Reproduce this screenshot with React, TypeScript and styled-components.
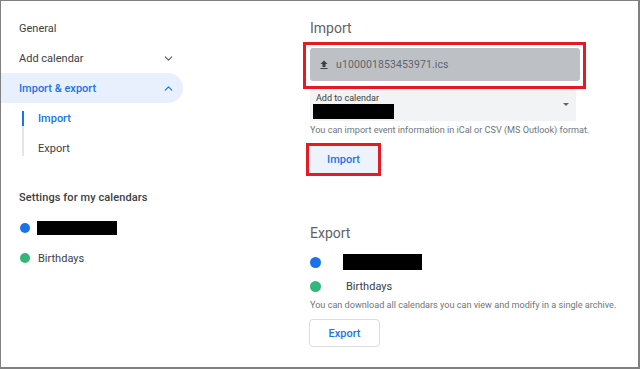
import React from "react";
import styled, { createGlobalStyle } from "styled-components";
import { ChevronDown, ChevronUp } from "lucide-react";

const GlobalStyle = createGlobalStyle`
	html, body {
		margin: 0;
		padding: 0;
		background: #fff;
	}
	body {
		font-family: Roboto, "Liberation Sans", Arial, sans-serif;
	}
`;

const Frame = styled.div`
	box-sizing: border-box;
	width: 640px;
	height: 369px;
	border-style: solid;
	border-color: #808080;
	border-width: 1px 2px 2px 1px;
	display: flex;
	overflow: hidden;
	background: #fff;
`;

const Sidebar = styled.nav`
	width: 182px;
	flex-shrink: 0;
	padding-top: 12px;
	display: flex;
	flex-direction: column;
`;

const NavRow = styled.div<{ $active?: boolean }>`
	height: 30px;
	display: flex;
	align-items: center;
	justify-content: space-between;
	padding: 0 8px 0 18px;
	font-size: 11px;
	font-weight: ${p => (p.$active ? 500 : 400)};
	color: ${p => (p.$active ? "#1a73e8" : "#3c4043")};
	background: ${p => (p.$active ? "#e8f0fe" : "transparent")};
	border-radius: 0 15px 15px 0;
`;

const SubList = styled.div`
	display: flex;
	flex-direction: column;
	margin-left: 21px;
`;

const SubItem = styled.div<{ $active?: boolean }>`
	height: 30px;
	display: flex;
	align-items: center;
	padding-left: 16px;
	font-size: 11px;
	font-weight: ${p => (p.$active ? 500 : 400)};
	color: ${p => (p.$active ? "#1a73e8" : "#3c4043")};
	background: ${p =>
		p.$active
			? "linear-gradient(to bottom, transparent 0 8px, #1a73e8 8px 23px, #e3e5e8 23px 30px)"
			: "linear-gradient(to bottom, #e3e5e8 0 23px, transparent 23px)"}
		left / 2px 100% no-repeat;
`;

const SectionTitle = styled.div`
	margin-top: 24px;
	height: 20px;
	display: flex;
	align-items: center;
	padding-left: 18px;
	font-size: 11px;
	font-weight: 500;
	color: #3c4043;
	letter-spacing: 0.1px;
`;

const CalList = styled.div`
	margin-top: 6px;
	display: flex;
	flex-direction: column;
`;

const CalRow = styled.div`
	height: 30px;
	display: flex;
	align-items: center;
	padding-left: 19px;
	gap: 7px;
	font-size: 11px;
	color: #3c4043;
`;

const Dot = styled.span<{ $color: string; $size: number }>`
	width: ${p => p.$size}px;
	height: ${p => p.$size}px;
	border-radius: 50%;
	background: ${p => p.$color};
	flex-shrink: 0;
`;

const Redacted = styled.span<{ $w: number; $h: number }>`
	display: inline-block;
	width: ${p => p.$w}px;
	height: ${p => p.$h}px;
	background: #000;
`;

const Main = styled.main`
	flex: 1;
	padding: 17px 0 0 127px;
	display: flex;
	flex-direction: column;
	align-items: flex-start;
`;

const Heading = styled.h2<{ $gap?: number }>`
	margin: ${p => p.$gap || 0}px 0 0;
	height: 20px;
	line-height: 20px;
	font-size: 14px;
	font-weight: 400;
	color: #5f6368;
`;

const Highlight = styled.div<{ $gap: number; $shift: number }>`
	margin: ${p => p.$gap}px 0 0 ${p => -p.$shift}px;
	border: 3px solid #e51b23;
`;

const FileBox = styled.div`
	margin: 3px 3px 5px 4px;
	width: 270px;
	height: 33px;
	box-sizing: border-box;
	background: #bdc1c6;
	border-radius: 3px;
	display: flex;
	align-items: center;
	padding-left: 8px;
	gap: 6px;
	font-size: 10.5px;
	letter-spacing: 0.1px;
	color: #5f6368;
`;

const Select = styled.div`
	width: 266px;
	height: 32px;
	box-sizing: border-box;
	background: #f1f3f4;
	border-radius: 3px 3px 0 0;
	padding: 5px 0 0 3px;
	display: flex;
	align-items: flex-start;
	justify-content: space-between;
`;

const SelectValue = styled.div`
	display: flex;
	flex-direction: column;
	gap: 1px;
`;

const SelectLabel = styled.span`
	font-size: 9px;
	line-height: 9px;
	color: #3c4043;
	padding-left: 3px;
`;

const Caret = styled.span`
	margin: 9px 7px 0 0;
	width: 0;
	height: 0;
	border-left: 3.5px solid transparent;
	border-right: 3.5px solid transparent;
	border-top: 3.5px solid #5f6368;
`;

const Hint = styled.p<{ $gap: number }>`
	margin: ${p => p.$gap}px 0 0;
	height: 14px;
	line-height: 14px;
	font-size: 9.1px;
	color: #70757a;
	white-space: nowrap;
`;

const Button = styled.button<{ $focused?: boolean }>`
	height: ${p => (p.$focused ? 27 : 28)}px;
	width: ${p => (p.$focused ? 69 : 71)}px;
	box-sizing: border-box;
	border: ${p => (p.$focused ? "none" : "1px solid #dadce0")};
	border-radius: ${p => (p.$focused ? 0 : 4)}px;
	background: ${p => (p.$focused ? "#eef3fb" : "#fff")};
	font-family: inherit;
	font-size: 11px;
	font-weight: 500;
	color: #1a73e8;
	padding: 0;
	cursor: pointer;
`;

const ExportRows = styled.div`
	margin-top: 7px;
	display: flex;
	flex-direction: column;
`;

const ExportRow = styled.div`
	height: 24px;
	display: flex;
	align-items: center;
	gap: 22px;
	font-size: 11px;
	color: #3c4043;
`;

const ExportButtonWrap = styled.div`
	margin: 7px 0 0 -1px;
`;

const UploadIcon = () => (
	<svg width="12" height="12" viewBox="0 0 24 24" fill="#3c4043">
		<path d="M9 16h6v-6h4l-7-7-7 7h4zm-4 2h14v2H5z" />
	</svg>
);

export default function App() {
	return (
		<>
			<GlobalStyle />
			<Frame>
				<Sidebar>
					<NavRow>General</NavRow>
					<NavRow>
						Add calendar
						<ChevronDown size={13} strokeWidth={2.2} color="#5f6368" />
					</NavRow>
					<NavRow $active>
						Import &amp; export
						<ChevronUp size={13} strokeWidth={2.2} color="#1a73e8" />
					</NavRow>
					<SubList>
						<SubItem $active>Import</SubItem>
						<SubItem>Export</SubItem>
					</SubList>
					<SectionTitle>Settings for my calendars</SectionTitle>
					<CalList>
						<CalRow>
							<Dot $color="#1a73e8" $size={10} />
							<Redacted $w={80} $h={14} />
						</CalRow>
						<CalRow>
							<Dot $color="#33b679" $size={10} />
							<span style={{ paddingLeft: 1 }}>Birthdays</span>
						</CalRow>
					</CalList>
				</Sidebar>
				<Main>
					<Heading>Import</Heading>
					<Highlight $gap={4} $shift={7}>
						<FileBox>
							<UploadIcon />
							u100001853453971.ics
						</FileBox>
					</Highlight>
					<Select>
						<SelectValue>
							<SelectLabel>Add to calendar</SelectLabel>
							<Redacted $w={81} $h={15} />
						</SelectValue>
						<Caret />
					</Select>
					<Hint $gap={2}>You can import event information in iCal or CSV (MS Outlook) format.</Hint>
					<Highlight $gap={6} $shift={4}>
						<Button $focused>Import</Button>
					</Highlight>
					<Heading $gap={47}>Export</Heading>
					<ExportRows>
						<ExportRow>
							<Dot $color="#1a73e8" $size={11} />
							<Redacted $w={79} $h={16} />
						</ExportRow>
						<ExportRow>
							<Dot $color="#33b679" $size={11} />
							<span style={{ paddingLeft: 3 }}>Birthdays</span>
						</ExportRow>
					</ExportRows>
					<Hint $gap={0}>You can download all calendars you can view and modify in a single archive.</Hint>
					<ExportButtonWrap>
						<Button>Export</Button>
					</ExportButtonWrap>
				</Main>
			</Frame>
		</>
	);
}
